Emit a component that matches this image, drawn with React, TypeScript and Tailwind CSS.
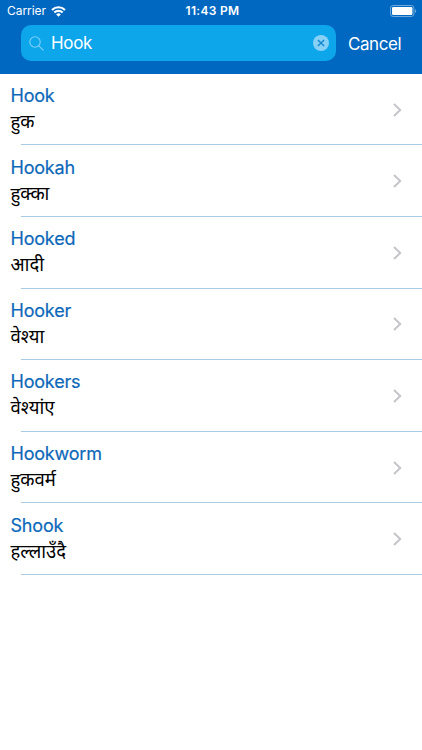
const entries = [
  { word: 'Hook', meaning: 'हुक' },
  { word: 'Hookah', meaning: 'हुक्का' },
  { word: 'Hooked', meaning: 'आदी' },
  { word: 'Hooker', meaning: 'वेश्या' },
  { word: 'Hookers', meaning: 'वेश्यांए' },
  { word: 'Hookworm', meaning: 'हुकवर्म' },
  { word: 'Shook', meaning: 'हल्लाउँदै' },
];

function WifiIcon() {
  return (
    <svg className="ml-[5px] h-[11px] w-[15px]" viewBox="0 0 15 11" fill="none" stroke="white" strokeWidth="2.1">
      <path d="M1 4a9.2 9.2 0 0 1 13 0" />
      <path d="M3.3 6.6a5.9 5.9 0 0 1 8.4 0" />
      <path d="M7.5 10.8 5.2 8.5a3.2 3.2 0 0 1 4.6 0Z" fill="white" stroke="none" />
    </svg>
  );
}

function BatteryIcon() {
  return (
    <svg className="h-[12px] w-[27px]" viewBox="0 0 27 12" fill="none">
      <rect x="0.5" y="0.5" width="23.4" height="11" rx="2.6" stroke="#6fa9de" />
      <rect x="2" y="2" width="20.4" height="8" rx="1.2" fill="white" />
      <path d="M25 4.2c1.7.5 1.7 3.1 0 3.6Z" fill="#6fa9de" />
    </svg>
  );
}

function StatusBar() {
  return (
    <div className="grid h-[22px] grid-cols-3 items-center pr-[5px] pl-[7px] text-white">
      <div className="flex items-center text-[12px] tracking-[-0.05px]">
        Carrier
        <WifiIcon />
      </div>
      <div className="pl-px text-center text-[12px] font-semibold tracking-[0.3px]">11:43 PM</div>
      <div className="-mt-px flex justify-end">
        <BatteryIcon />
      </div>
    </div>
  );
}

function SearchBar() {
  return (
    <div className="flex pt-[3px] pl-[21px]">
      <div className="flex h-[36px] w-[315px] items-center rounded-[10px] bg-[#0da6eb] pr-[7px] pl-[8px]">
        <svg className="h-[15px] w-[15px]" viewBox="0 0 15 15" fill="none" stroke="#7bd0f7" strokeWidth="1.1" strokeLinecap="round">
          <circle cx="6" cy="6" r="5.2" />
          <path d="m9.8 9.8 4.4 4.4" />
        </svg>
        <span className="ml-[7px] flex-1 text-[17px] leading-[36px] tracking-[-0.3px] text-white">Hook</span>
        <svg className="h-[16px] w-[16px]" viewBox="0 0 16 16">
          <circle cx="8" cy="8" r="8" fill="#86d1f5" />
          <path d="m4.9 4.9 6.2 6.2m0-6.2-6.2 6.2" stroke="#1287cf" strokeWidth="1.4" />
        </svg>
      </div>
      <span className="ml-[12px] text-[17px] leading-[38px] tracking-[-0.45px] text-white">Cancel</span>
    </div>
  );
}

function EntryRow({ word, meaning }: { word: string; meaning: string }) {
  return (
    <li className="flex h-[71.6px] flex-col">
      <div className="flex flex-1 items-center justify-between pr-[20px] pl-[10.5px]">
        <div>
          <div className="h-[26px] text-[18px] leading-[27px] tracking-[-0.2px] text-[#0c68b9] [-webkit-text-stroke:0.2px_#0c68b9]">{word}</div>
          <div className="h-[28px] font-['Noto_Sans',sans-serif] text-[18.5px] leading-[26px] text-black">{meaning}</div>
        </div>
        <svg className="mt-px h-[14px] w-[9px]" viewBox="0 0 9 14" fill="none" stroke="#c5c5ca" strokeWidth="2">
          <path d="m1 1 6.2 6L1 13" />
        </svg>
      </div>
      <div className="ml-[21px] h-px bg-[#a9cbe6]" />
    </li>
  );
}

export default function App() {
  return (
    <div className="h-[750px] w-[422px] overflow-hidden bg-white font-['Inter',sans-serif]">
      <header className="h-[73.5px] bg-[#0068c1]">
        <StatusBar />
        <SearchBar />
      </header>
      <ul className="pt-[0.3px]">
        {entries.map((entry) => (
          <EntryRow key={entry.word} {...entry} />
        ))}
      </ul>
    </div>
  );
}
